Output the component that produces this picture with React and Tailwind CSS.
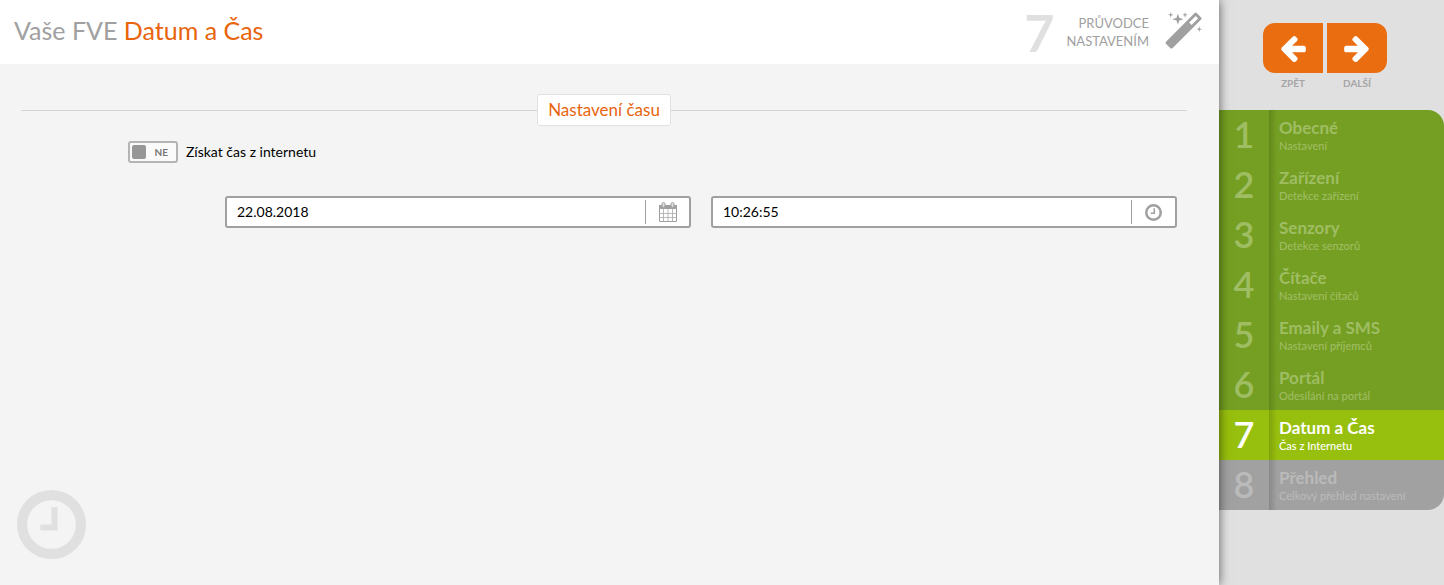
import React, { useState } from 'react';
import clsx from 'clsx';

const steps = [
  { id: 1, title: 'Obecné', subtitle: 'Nastavení' },
  { id: 2, title: 'Zařízení', subtitle: 'Detekce zařízení' },
  { id: 3, title: 'Senzory', subtitle: 'Detekce senzorů' },
  { id: 4, title: 'Čítače', subtitle: 'Nastavení čítačů' },
  { id: 5, title: 'Emaily a SMS', subtitle: 'Nastavení příjemců' },
  { id: 6, title: 'Portál', subtitle: 'Odesílání na portál' },
  { id: 7, title: 'Datum a Čas', subtitle: 'Čas z Internetu' },
  { id: 8, title: 'Přehled', subtitle: 'Celkový přehled nastavení' },
];

const CURRENT_STEP = 7;

// Icons
const MagicIcon = ({ className }) => (
  <svg viewBox="0 0 1792 1792" fill="currentColor" className={className} aria-hidden="true">
    <path d="M1190 581l293-293-107-107-293 293zm447-293q0 27-18 45l-1286 1286q-18 18-45 18t-45-18l-198-198q-18-18-18-45t18-45l1286-1286q18-18 45-18t45 18l198 198q18 18 18 45zm-1351-190l98 30-98 30-30 98-30-98-98-30 98-30 30-98zm350 162l196 60-196 60-60 196-60-196-196-60 196-60 60-196zm930 478l98 30-98 30-30 98-30-98-98-30 98-30 30-98zm-640-640l98 30-98 30-30 98-30-98-98-30 98-30 30-98z" />
  </svg>
);

const ArrowIcon = ({ className }) => (
  <svg viewBox="0 0 1792 1792" fill="currentColor" className={className} aria-hidden="true">
    <path d="M1664 896v128q0 53-32.5 90.5t-84.5 37.5h-704l293 294q38 36 38 90t-38 90l-75 76q-37 37-90 37-52 0-91-37l-651-652q-37-37-37-90 0-52 37-91l651-650q38-38 91-38 52 0 90 38l75 74q38 38 38 91t-38 91l-293 293h704q52 0 84.5 37.5t32.5 90.5z" />
  </svg>
);

const ClockIcon = ({ className }) => (
  <svg viewBox="0 0 68 68" fill="none" stroke="currentColor" className={className} aria-hidden="true">
    <circle cx="34" cy="34" r="29" strokeWidth="10" />
    <path d="M37 17v20H23" strokeWidth="6" />
  </svg>
);

const CalendarIcon = ({ className }) => (
  <svg viewBox="0 0 20 20" fill="none" stroke="currentColor" className={className} aria-hidden="true">
    <path d="M1 3h18v4H1z" fill="currentColor" stroke="none" />
    <path d="M1.5 3.5h17v16h-17z" />
    <path d="M1 11.5h18M1 15.5h18M5.5 7v12M10 7v12M14.5 7v12" strokeOpacity="0.7" />
    <rect x="4" y="0.5" width="3" height="5" rx="1.5" fill="#dddddd" />
    <rect x="13" y="0.5" width="3" height="5" rx="1.5" fill="#dddddd" />
  </svg>
);

const IconField = ({ label, value, onChange, icon }) => (
  <div className="flex h-8 items-center rounded-[3px] border-2 border-[#a0a0a0] bg-white">
    <input
      type="text"
      aria-label={label}
      value={value}
      onChange={(e) => onChange(e.target.value)}
      className="min-w-0 flex-1 bg-transparent px-[10px] text-[14px] leading-[22px] text-black outline-none"
    />
    <button type="button" aria-label={label} className="flex h-6 w-11 items-center justify-center border-l border-[#a0a0a0] text-[#a0a0a0]">
      {icon}
    </button>
  </div>
);

const NavButton = ({ label, forward }) => (
  <button type="button" className="flex w-[60px] flex-col items-center gap-1 text-[10px] font-bold leading-3 text-[#a5a5a5]">
    <span className={clsx('flex h-[50px] w-full items-center justify-center bg-[#ea6d10] text-white', forward ? 'rounded-r-xl' : 'rounded-l-xl')}>
      <ArrowIcon className={clsx('size-[30px]', forward && '-scale-x-100')} />
    </span>
    {label}
  </button>
);

const StepItem = ({ step }) => (
  <li>
    <a
      href={`#step-${step.id}`}
      aria-current={step.id === CURRENT_STEP ? 'step' : undefined}
      className={clsx(
        'flex h-[50px]',
        step.id < CURRENT_STEP && 'bg-[#759f22] text-[#9fbd62]',
        step.id === CURRENT_STEP && 'bg-[#97bf0d] text-white',
        step.id > CURRENT_STEP && 'bg-[#a1a1a1] text-[#bababa]'
      )}
    >
      <span className="flex w-[50px] items-center justify-center pb-[2px] text-[36px] font-semibold leading-none">{step.id}</span>
      <span className="flex flex-1 flex-col bg-linear-to-r from-black/15 to-transparent to-[8px] pl-[10px] pt-2">
        <span className="text-[17px] font-bold leading-5">{step.title}</span>
        <span className="text-[11px] font-medium leading-4">{step.subtitle}</span>
      </span>
    </a>
  </li>
);

const App = () => {
  const [fromInternet, setFromInternet] = useState(false);
  const [date, setDate] = useState('22.08.2018');
  const [time, setTime] = useState('10:26:55');

  return (
    <div className="flex min-h-screen bg-[#e0e0e0] font-['Lato','Noto_Sans',sans-serif]">
      <main className="relative z-10 flex min-w-0 flex-1 flex-col bg-[#f4f4f4] shadow-[0_0_10px_rgba(0,0,0,0.6)]">
        <header className="flex h-16 items-center bg-white px-[14px]">
          <h1 className="flex-1 pb-1 text-[25px] leading-8 text-[#a0a0a0]">
            Vaše FVE <span className="text-[#e8650d]">Datum a Čas</span>
          </h1>
          <span className="text-[52px] font-bold leading-[64px] text-[#e0e0e0]">{CURRENT_STEP}</span>
          <p className="ml-3 text-right text-[13px] leading-[18px] text-[#a0a0a0]">
            PRŮVODCE
            <br />
            NASTAVENÍM
          </p>
          <MagicIcon className="ml-4 size-10 text-[#a0a0a0]" />
        </header>

        <form className="pl-[21px] pr-8 pt-[30px]" onSubmit={(e) => e.preventDefault()}>
          <div className="flex items-center">
            <div className="h-px flex-1 bg-[#d4d4d4]" />
            <h2 className="rounded-[3px] border border-[#e0e0e0] bg-white px-[10px] text-[17px] leading-[30px] text-[#e8650d]">Nastavení času</h2>
            <div className="h-px flex-1 bg-[#d4d4d4]" />
          </div>

          <label className="ml-[107px] mt-[15px] flex w-fit items-center gap-2 text-[14px] leading-[22px] text-black">
            <span className="flex h-[22px] w-[50px] items-center justify-between rounded-[3px] border-2 border-[#b4b4b4] bg-[#fafafa] pl-[2px] pr-2 text-[10px] font-bold text-[#777777]">
              <input
                type="checkbox"
                checked={fromInternet}
                onChange={(e) => setFromInternet(e.target.checked)}
                className="size-[14px] appearance-none rounded-[2px] bg-[#979797]"
              />
              {fromInternet ? 'ANO' : 'NE'}
            </span>
            Získat čas z internetu
          </label>

          <div className="mt-[33px] grid grid-cols-2 gap-5 pl-[204px] pr-[10px]">
            <IconField label="Datum" value={date} onChange={setDate} icon={<CalendarIcon className="size-5" />} />
            <IconField label="Čas" value={time} onChange={setTime} icon={<ClockIcon className="size-[17px]" />} />
          </div>
        </form>

        <ClockIcon className="mb-[26px] ml-[17px] mt-auto size-[69px] text-[#e0e0e0]" />
      </main>

      <aside className="w-[225px] shrink-0">
        <div className="flex h-[110px] gap-1 pl-11 pt-[23px]">
          <NavButton label="ZPĚT" />
          <NavButton label="DALŠÍ" forward />
        </div>
        <nav>
          <ol className="overflow-hidden rounded-r-2xl">
            {steps.map((step) => (
              <StepItem key={step.id} step={step} />
            ))}
          </ol>
        </nav>
      </aside>
    </div>
  );
};

export default App;
